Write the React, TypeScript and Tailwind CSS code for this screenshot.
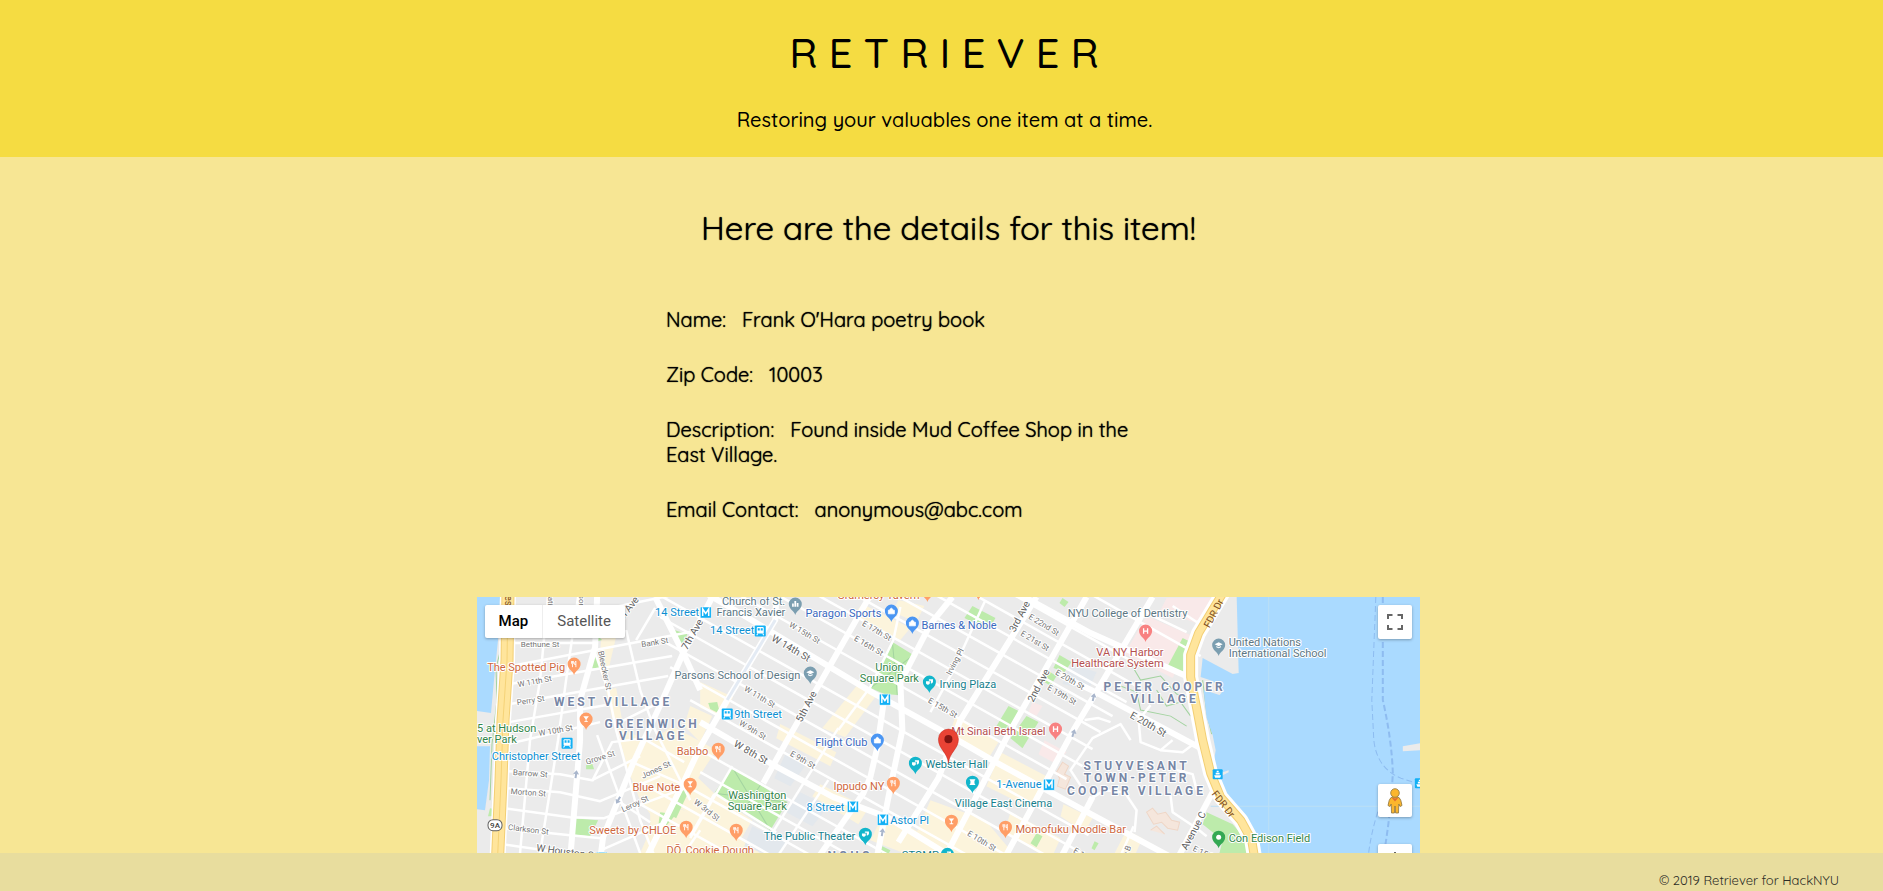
import React from 'react';

const HALO = 'stroke-white [paint-order:stroke] [stroke-linejoin:round]';

type Pt = [number, number];

const line = (pts: Pt[]) => 'M' + pts.map((p) => p.join(' ')).join(' L');
const area = (pts: Pt[]) => line(pts) + ' Z';

/* Cross streets of the main grid all share one slope. */
const street = (yAt940: number, x1: number, x2: number): Pt[] => [
  [x1, Math.round(yAt940 + (x1 - 940) * 0.56)],
  [x2, Math.round(yAt940 + (x2 - 940) * 0.56)],
];

const WATER_WEST: Pt[][] = [
  [[477, 597], [500, 597], [498, 640], [494, 680], [491, 713], [477, 711]],
  [[477, 746], [490, 746], [489, 780], [485, 810], [477, 809]],
];

const WATER_EAST: Pt[] = [
  [1236, 597], [1238, 673], [1232, 674], [1202, 658], [1200, 677], [1212, 681], [1223, 690], [1219, 695],
  [1203, 690], [1206, 718], [1212, 735], [1215, 750], [1213, 763], [1220, 784], [1224, 798], [1247, 820],
  [1257, 840], [1262, 860], [1290, 1000], [1425, 1000], [1425, 597],
];

const COMMERCIAL: Pt[][] = [
  [[602, 625], [618, 628], [606, 680], [600, 652]],
  [[606, 690], [616, 688], [622, 720], [612, 718]],
  [[700, 682], [733, 697], [722, 716], [700, 708]],
  [[690, 706], [712, 716], [700, 742], [684, 726]],
  [[616, 726], [650, 742], [672, 726], [716, 750], [690, 790], [662, 830], [640, 800], [628, 770]],
  [[650, 800], [690, 812], [730, 832], [760, 853], [640, 853], [650, 830]],
  [[690, 770], [716, 795], [752, 820], [740, 840], [680, 808]],
  [[857, 685], [875, 697], [845, 737], [822, 728]],
  [[862, 604], [910, 628], [900, 640], [852, 616]],
  [[898, 600], [924, 606], [916, 622], [892, 612]],
  [[780, 724], [836, 752], [830, 766], [776, 738]],
  [[820, 784], [868, 808], [858, 824], [812, 796]],
  [[884, 812], [950, 850], [948, 870], [870, 840]],
  [[955, 716], [998, 742], [988, 758], [948, 738]],
  [[1000, 752], [1046, 776], [1030, 808], [986, 786]],
  [[930, 800], [985, 820], [1010, 850], [960, 870], [912, 842]],
  [[1010, 812], [1060, 838], [1050, 860], [1004, 832]],
  [[1063, 804], [1092, 818], [1084, 832], [1060, 816]],
  [[1126, 830], [1142, 838], [1132, 860], [1114, 853]],
];

const HEALTH: Pt[][] = [
  [[1146, 616], [1192, 636], [1172, 678], [1124, 654]],
  [[1166, 598], [1218, 598], [1198, 624], [1160, 610]],
  [[1032, 702], [1042, 706], [1036, 716], [1028, 712]],
  [[1044, 740], [1066, 752], [1056, 764], [1038, 754]],
];

const CAMPUS: Pt[][] = [
  [[786, 752], [806, 764], [790, 786], [774, 778]],
  [[800, 792], [828, 806], [812, 826], [786, 812]],
  [[752, 826], [786, 842], [778, 858], [744, 846]],
  [[1070, 664], [1096, 672], [1088, 690], [1062, 684]],
];

const PARKS: Pt[][] = [
  [[892, 642], [913, 655], [897, 695], [884, 694], [870, 688]],
  [[732, 767], [787, 802], [770, 830], [714, 793]],
  [[972, 606], [995, 618], [988, 630], [964, 618]],
  [[1059, 655], [1071, 662], [1064, 672], [1053, 668]],
  [[1048, 671], [1056, 676], [1050, 686], [1044, 682]],
  [[1008, 706], [1020, 712], [1008, 732], [996, 726]],
  [[1026, 716], [1038, 722], [1022, 748], [1010, 738]],
  [[1062, 598], [1068, 602], [1064, 607], [1059, 603]],
  [[674, 630], [687, 634], [683, 648]],
  [[596, 652], [600, 668], [591, 668]],
  [[595, 634], [602, 640], [594, 642]],
  [[708, 703], [717, 702], [720, 714], [710, 709]],
  [[573, 818], [598, 820], [590, 836], [571, 834]],
  [[678, 792], [690, 788], [676, 818], [666, 812]],
  [[660, 812], [676, 814], [664, 828], [658, 826]],
  [[586, 765], [592, 763], [594, 769], [586, 769]],
  [[1182, 638], [1190, 642], [1184, 678], [1166, 668]],
  [[1036, 833], [1042, 836], [1036, 847], [1030, 843]],
  [[1094, 841], [1098, 843], [1094, 850], [1091, 848]],
  [[1206, 812], [1232, 824], [1246, 840], [1250, 870], [1216, 864], [1222, 840], [1202, 824]],
  [[882, 846], [890, 850], [886, 858], [878, 856]],
  [[490, 808], [495, 809], [494, 816], [488, 816]],
];

const PATHS: Pt[][] = [
  [[732, 767], [770, 830]], [[787, 802], [714, 793]], [[760, 785], [742, 812]],
  [[892, 642], [897, 695]], [[913, 655], [870, 688]],
  [[1128, 660], [1140, 680], [1160, 676], [1176, 694], [1190, 698]],
  [[1120, 686], [1136, 692], [1140, 710], [1170, 716], [1186, 726]],
  [[1156, 690], [1166, 706], [1180, 702], [1190, 716]],
  [[503, 640], [496, 668], [497, 700], [492, 744], [490, 800]],
  [[1202, 680], [1206, 712], [1211, 734]],
];

const MINOR: Pt[][] = [
  /* north of 14th Street */
  street(708, 730, 1066), street(686, 740, 1082), street(664, 760, 1092), street(642, 800, 1100),
  street(620, 860, 1112), street(598, 880, 1126), street(576, 930, 1136), street(554, 960, 1140),
  street(510, 1010, 1200),
  /* south of 14th Street */
  street(752, 650, 1088), street(774, 660, 1080), street(796, 665, 1072), street(818, 670, 1070),
  street(840, 690, 1110), street(884, 700, 960), street(906, 700, 860), street(928, 690, 830),
  street(818, 1060, 1130), street(795, 1060, 1140), street(950, 640, 790), street(972, 640, 760),
  /* West Village streets */
  [[513, 613], [596, 608]], [[513, 643], [596, 643]], [[511, 666], [690, 632]], [[510, 684], [672, 656]],
  [[510, 704], [668, 676]], [[509, 722], [612, 704]], [[508, 744], [600, 722]], [[507, 771], [560, 774], [592, 780], [640, 756]],
  [[506, 788], [560, 792], [600, 801], [660, 776]], [[504, 808], [570, 817], [604, 818], [690, 786]],
  [[503, 828], [570, 835], [601, 838]], [[601, 850], [660, 824]], [[502, 844], [600, 858]],
  [[600, 610], [668, 596]], [[620, 722], [664, 700]], [[592, 781], [612, 742], [646, 738]],
  [[646, 740], [684, 762]], [[632, 762], [682, 784]], [[617, 800], [650, 822]],
  /* West Village avenues */
  [[548, 597], [540, 680], [530, 740], [520, 853]], [[578, 597], [566, 680], [558, 740], [540, 853]],
  [[593, 647], [608, 690], [616, 730], [640, 820], [660, 870]],
  [[597, 735], [617, 790], [640, 853]], [[640, 690], [654, 728], [690, 800]],
  [[626, 630], [640, 690]], [[655, 608], [636, 640]],
  /* lower avenues of the grid */
  [[838, 728], [797, 793], [770, 836]], [[828, 780], [776, 858]], [[900, 607], [893, 640], [870, 687], [838, 730]],
  [[985, 600], [952, 672], [930, 712]], [[1133, 826], [1118, 860]], [[700, 830], [672, 870]],
  [[732, 766], [690, 838]], [[714, 794], [690, 836]], [[714, 793], [776, 832]],
  /* housing estate loops */
  [[1083, 790], [1070, 770], [1092, 738], [1120, 724], [1130, 740]],
  [[1088, 800], [1104, 790], [1124, 792], [1136, 810], [1134, 832]],
  [[1172, 740], [1160, 750], [1140, 742], [1138, 720], [1150, 705]],
  [[1170, 796], [1172, 812], [1196, 828], [1206, 836]],
  [[1160, 750], [1182, 752], [1198, 740]], [[1140, 610], [1186, 632]],
  [[1172, 606], [1196, 622], [1210, 618]],
  [[1176, 770], [1192, 774], [1196, 790]], [[1084, 720], [1098, 718], [1110, 722]],
];

const MAJOR: Pt[][] = [
  /* 14th, 8th, 23rd and 20th Streets */
  [[660, 566], [763, 627], [873, 693], [940, 730], [997, 763], [1083, 810], [1180, 862]],
  [[700, 722], [777, 767], [833, 797], [887, 817], [950, 856]],
  [[1000, 584], [1090, 633], [1190, 678]],
  [[1060, 675], [1097, 693], [1200, 748]],
  /* avenues */
  [[869, 597], [787, 740], [763, 783]],
  [[776, 597], [775, 620], [727, 700], [700, 747], [683, 783], [644, 862]],
  [[712, 597], [683, 653], [660, 705], [633, 763], [603, 837], [600, 860]],
  [[655, 597], [683, 653], [700, 690]],
  [[597, 597], [595, 647], [580, 700], [580, 740], [570, 860]],
  [[952, 597], [930, 624], [900, 682], [902, 730], [890, 787], [876, 860]],
  [[884, 697], [877, 747], [870, 777], [863, 793], [816, 860]],
  [[1036, 597], [960, 720], [938, 778], [898, 842]],
  [[1086, 597], [1010, 730], [944, 858]],
  [[1152, 597], [1097, 690], [1073, 730], [1003, 860]],
  [[1092, 797], [1060, 858]],
  [[1212, 792], [1176, 860]],
];

const FDR: Pt[] = [[1224, 590], [1198, 633], [1190, 655], [1190, 677], [1196, 708], [1202, 740], [1210, 773], [1220, 797], [1240, 820], [1251, 840], [1256, 870]];

const HIGHWAY_WEST: Pt[] = [[508, 590], [507, 660], [503, 720], [501, 780], [497, 870]];

const STREET_LABELS: [string, number, number, number][] = [
  ['Bethune St', 540, 647, 0], ['Bank St', 655, 645, -9], ['W 11th St', 535, 684, -11], ['Perry St', 531, 703, -9],
  ['W 10th St', 556, 733, -10], ['Bleecker St', 602, 671, 78], ['Grove St', 601, 760, -18], ['Jones St', 657, 772, -25],
  ['Leroy St', 636, 806, -25], ['W 3rd St', 705, 812, 38], ['Barrow St', 530, 776, 4], ['Morton St', 528, 795, 4],
  ['Clarkson St', 528, 832, 7], ['W 15th St', 803, 635, 31], ['E 17th St', 875, 633, 30], ['E 16th St', 867, 648, 30],
  ['W 11th St', 758, 699, 31], ['W 9th St', 751, 732, 31], ['E 9th St', 801, 762, 30], ['E 22nd St', 1042, 627, 31],
  ['E 21st St', 1033, 643, 31], ['E 20th St', 1068, 682, 30], ['E 19th St', 1060, 697, 30], ['E 15th St', 941, 710, 30],
  ['Irving Pl', 957, 663, -62], ['E 10th St', 980, 843, 31], ['E 11th St', 1086, 860, 31], ['E 15th St', 1206, 857, 25],
  ['Horatio', 548, 597, 90], ['Hudson', 579, 594, 90], ['Ave B', 1127, 856, -68],
];

const AVENUE_LABELS: [string, number, number, number][] = [
  ['8th Ave', 629, 613, -52], ['7th Ave', 695, 636, -60], ['W 14th St', 789, 651, 30], ['5th Ave', 809, 708, -62],
  ['3rd Ave', 1022, 618, -62], ['2nd Ave', 1041, 687, -62], ['E 20th St', 1146, 727, 30], ['W 8th St', 749, 755, 30],
  ['Avenue C', 1196, 832, -62], ['W Houston St', 566, 855, 8],
];

type Tone = 'food' | 'shop' | 'fun' | 'transit' | 'health' | 'school' | 'park';

const TONE_TEXT: Record<Tone, string> = {
  food: 'fill-[#ce6740]', shop: 'fill-[#3a69c0]', fun: 'fill-[#16808c]', transit: 'fill-[#0d8fd2]',
  health: 'fill-[#b5504f]', school: 'fill-[#5c7784]', park: 'fill-[#33864a]',
};

const TONE_PIN: Record<Tone, string> = {
  food: 'fill-[#ff9e67]', shop: 'fill-[#4b96f3]', fun: 'fill-[#12b5cb]', transit: 'fill-[#12b0f5]',
  health: 'fill-[#f88181]', school: 'fill-[#7b9eb0]', park: 'fill-[#34a853]',
};

type Anchor = 'start' | 'middle' | 'end';

const PLACES: [string, number, number, Tone, Anchor][] = [
  ['14 Street', 699, 616, 'transit', 'end'], ['Church of St.', 785, 605, 'school', 'end'],
  ['Francis Xavier', 785, 616, 'school', 'end'], ['14 Street', 754, 634, 'transit', 'end'],
  ['Paragon Sports', 881, 617, 'shop', 'end'], ['Barnes & Noble', 921, 629, 'shop', 'start'],
  ['Gramercy Tavern', 878, 599, 'food', 'middle'],
  ['Parsons School of Design', 800, 679, 'school', 'end'], ['Union', 889, 671, 'park', 'middle'],
  ['Square Park', 889, 682, 'park', 'middle'], ['Irving Plaza', 939, 688, 'fun', 'start'],
  ['9th Street', 734, 718, 'transit', 'start'], ['The Spotted Pig', 565, 671, 'food', 'end'],
  ['5 at Hudson', 477, 732, 'park', 'start'], ['ver Park', 477, 743, 'park', 'start'],
  ['Christopher Street', 536, 760, 'transit', 'middle'], ['Babbo', 708, 755, 'food', 'end'],
  ['Blue Note', 680, 791, 'food', 'end'], ['Sweets by CHLOE', 676, 834, 'food', 'end'],
  ['DŌ, Cookie Dough', 710, 854, 'food', 'middle'], ['Washington', 757, 799, 'park', 'middle'],
  ['Square Park', 757, 810, 'park', 'middle'], ['Flight Club', 867, 746, 'shop', 'end'],
  ['Ippudo NY', 884, 790, 'food', 'end'], ['8 Street', 844, 811, 'transit', 'end'],
  ['Astor Pl', 890, 824, 'transit', 'start'], ['The Public Theater', 855, 840, 'fun', 'end'],
  ['STOMP', 920, 859, 'fun', 'middle'], ['Webster Hall', 925, 768, 'fun', 'start'],
  ['Village East Cinema', 1003, 807, 'fun', 'middle'], ['1-Avenue', 1041, 788, 'transit', 'end'],
  ['Momofuku Noodle Bar', 1015, 833, 'food', 'start'], ['Mt Sinai Beth Israel', 1045, 735, 'health', 'end'],
  ['NYU College of Dentistry', 1127, 617, 'school', 'middle'], ['VA NY Harbor', 1163, 656, 'health', 'end'],
  ['Healthcare System', 1163, 667, 'health', 'end'], ['United Nations', 1228, 646, 'school', 'start'],
  ['International School', 1228, 657, 'school', 'start'], ['Con Edison Field', 1228, 842, 'park', 'start'],
];

const DISTRICTS: [string, number, number][] = [
  ['WEST VILLAGE', 613, 706], ['GREENWICH', 652, 728], ['VILLAGE', 653, 740], ['PETER COOPER', 1164, 691],
  ['VILLAGE', 1164, 703], ['STUYVESANT', 1136, 770], ['TOWN-PETER', 1136, 782], ['COOPER VILLAGE', 1136, 795],
  ['NOHO', 850, 860],
];

type Glyph = 'fork' | 'glass' | 'bag' | 'mask' | 'cap' | 'cross' | 'bars' | 'tree' | 'film';

const GLYPHS: Record<Glyph, React.ReactNode> = {
  fork: <path d="M-2.5 -3v2.2q0 .9 .9 .9v3M-1.6 -3v2.5M-.7 -3v2.2q0 .9 -.9 .9M1.8 3.1v-6q-1.3 .6 -1.3 3.3h1.3" className="fill-none stroke-white stroke-[0.9]" />,
  glass: <path d="M-2.8 -2.8h5.6l-2.3 2.9v2h1.3v.9h-3.6v-.9h1.3v-2z" className="fill-white" />,
  bag: <path d="M-3 -.8h6v3.600h-6zM-1.500 -.8v-.8q1.500 -2.400 3 0v.8" className="fill-white stroke-white stroke-[0.8]" />,
  mask: <path d="M-3.4 -.8h3.8v2.2q-1.9 2.4 -3.8 0zM.9 -2.8h2.7v2.6q-1 1.7 -2.2 1.5v-2.7h-1.9v-1.4z" className="fill-white" />,
  cap: <path d="M-4 -.8l4 -2 4 2 -4 2zM-2.3 .9l2.3 1.2 2.3 -1.2v1.4q-2.3 1.6 -4.6 0z" className="fill-white" />,
  cross: <path d="M-2 -2.8v5.6M2 -2.8v5.6M-2 0h4" className="fill-none stroke-white stroke-[1.3]" />,
  bars: <path d="M-3.2 -.4h1.7v3.2h-1.7zM-.9 -3h1.8v5.8h-1.8zM1.5 -1h1.7v3.8h-1.7z" className="fill-white" />,
  tree: <circle r="2.5" className="fill-white" />,
  film: <path d="M-3 -2.8h6l-1 1.7v2.2l1 1.7h-6l1 -1.7v-2.2z" className="fill-white" />,
};

const PINS: [number, number, Tone, Glyph][] = [
  [574, 664, 'food', 'fork'], [586, 719, 'food', 'glass'], [795, 604, 'school', 'bars'], [891, 611, 'shop', 'bag'],
  [912, 623, 'shop', 'bag'], [810, 673, 'school', 'cap'], [929, 682, 'fun', 'mask'], [1145, 631, 'health', 'cross'],
  [1055, 729, 'health', 'cross'], [1218, 645, 'school', 'cap'], [718, 749, 'food', 'fork'], [690, 784, 'food', 'glass'],
  [686, 827, 'food', 'fork'], [736, 830, 'food', 'fork'], [877, 740, 'shop', 'bag'], [915, 763, 'fun', 'mask'],
  [893, 783, 'food', 'fork'], [865, 834, 'fun', 'mask'], [972, 782, 'fun', 'film'], [951, 821, 'food', 'glass'],
  [1005, 827, 'food', 'fork'], [947, 854, 'fun', 'mask'], [1218, 837, 'park', 'tree'], [927, 591, 'food', 'fork'],
  [978, 589, 'food', 'fork'],
];

const SUBWAYS: [number, number][] = [[705, 612], [884, 699], [852, 806], [882, 819], [1048, 784], [601, 857]];
const TRAINS: [number, number][] = [[760, 631], [727, 714], [567, 743]];
const FERRIES: [number, number][] = [[1217, 774], [1419, 783]];
const ARROWS: [number, number, number][] = [[1093, 697, 12], [1073, 733, 18], [882, 832, 8], [576, 774, 8], [618, 800, 210]];

function Place({ x, y, tone, glyph }: { x: number; y: number; tone: Tone; glyph: Glyph }) {
  return (
    <g transform={`translate(${x} ${y})`}>
      <path d="M0 11 C-1 7 -6.500 5 -6.500 0 A6.500 6.500 0 0 1 6.500 0 C6.500 5 1 7 0 11Z" className={TONE_PIN[tone]} />
      {GLYPHS[glyph]}
    </g>
  );
}

function CityMap() {
  return (
    <svg
      viewBox="477 597 943 400"
      preserveAspectRatio="xMidYMin slice"
      className="block h-full w-full bg-[#ebebeb] font-[Roboto,sans-serif] font-normal"
      role="img"
      aria-label="Map of lower Manhattan"
    >
      <g className="fill-[#fcf4dc]">{COMMERCIAL.map((p, i) => <path key={i} d={area(p)} />)}</g>
      <g className="fill-[#f9e9e9]">{HEALTH.map((p, i) => <path key={i} d={area(p)} />)}</g>
      <g className="fill-[#e3e8ed]">{CAMPUS.map((p, i) => <path key={i} d={area(p)} />)}</g>
      <g className="fill-[#bdebab]">{PARKS.map((p, i) => <path key={i} d={area(p)} />)}</g>
      <g className="fill-none stroke-[#a3d3a0] stroke-1">{PATHS.map((p, i) => <path key={i} d={line(p)} />)}</g>
      <path
        d="M1056 772l6 -10 6 4 -4 8 6 3 -5 12 -8 -3 2 -8zM1146 812l6 -4 5 6 8 -2 6 8 8 2 -2 8 -10 -2 -6 -6 -8 2zM1150 830l6 -4 8 8"
        className="fill-[#f5e6dc] stroke-[#efd6c6] stroke-1"
      />
      <g className="fill-none stroke-white stroke-[2.500] [stroke-linejoin:round]">
        {MINOR.map((p, i) => <path key={i} d={line(p)} />)}
      </g>
      <g className="fill-none stroke-white stroke-[6] [stroke-linejoin:round]">
        {MAJOR.map((p, i) => <path key={i} d={line(p)} />)}
      </g>
      <path d="M775 620L727 700" className="fill-none stroke-[#e4ebf4] stroke-[3]" />

      <g className="fill-[#aadaff]">
        {WATER_WEST.map((p, i) => <path key={i} d={area(p)} />)}
        <path d={area(WATER_EAST)} />
      </g>
      <path d="M1219 773l9 -3v2l-8 4zM1402 746l18 -3v7l-18 1z" className="fill-[#ebebeb]" />
      <path d="M1268 597v400M1210 806h210" className="fill-none stroke-[#bcdff5] stroke-1" />
      <g className="fill-none stroke-[#8ebcf0] stroke-1 [stroke-dasharray:6_3]">
        <path d="M1375 597L1371 700L1373 740Q1376 768 1400 778L1416 783" />
        <path d="M1382 597L1382 700Q1391 740 1392 773Q1390 815 1382 860" className="stroke-2" />
        <path d="M1380 803Q1370 830 1367 860" />
      </g>

      <g className="fill-none [stroke-linejoin:round]">
        <path d={line(FDR)} className="stroke-white stroke-[15]" />
        <path d={line(FDR)} className="stroke-[#f3cf74] stroke-[9]" />
        <path d={line(FDR)} className="stroke-[#ffe59c] stroke-[7]" />
        <path d={line(HIGHWAY_WEST)} className="stroke-white stroke-[16]" />
        <path d={line(HIGHWAY_WEST)} className="stroke-[#f3cf74] stroke-[13]" />
        <path d={line(HIGHWAY_WEST)} className="stroke-[#ffe59c] stroke-[11]" />
        <path d={line(HIGHWAY_WEST)} className="stroke-[#f5d378] stroke-1" />
      </g>

      <g className="fill-[#a9b6cc]">
        {ARROWS.map(([x, y, r], i) => (
          <path key={i} d="M-1 4v-4h-2l3 -4 3 4h-2v4z" transform={`translate(${x} ${y}) rotate(${r})`} />
        ))}
      </g>

      <g textAnchor="middle" className={`fill-[#757575] stroke-2 text-[8px] ${HALO}`}>
        {STREET_LABELS.map(([t, x, y, r], i) => (
          <text key={i} transform={`translate(${x} ${y}) rotate(${r})`}>{t}</text>
        ))}
      </g>
      <g textAnchor="middle" className={`fill-[#616161] stroke-2 text-[10px] ${HALO}`}>
        {AVENUE_LABELS.map(([t, x, y, r], i) => (
          <text key={i} transform={`translate(${x} ${y}) rotate(${r})`}>{t}</text>
        ))}
      </g>
      <g textAnchor="middle" className="fill-[#7d4e1c] text-[10px]">
        <text transform="translate(1216 615) rotate(-62)">FDR Dr</text>
        <text transform="translate(1220 806) rotate(52)">FDR Dr</text>
        <text transform="translate(505 598) rotate(90)">West</text>
      </g>

      <g textAnchor="middle" className={`fill-[#7786a5] stroke-2 text-[12px] font-bold tracking-[3px] ${HALO}`}>
        {DISTRICTS.map(([t, x, y], i) => <text key={i} x={x} y={y}>{t}</text>)}
      </g>

      {PINS.map(([x, y, tone, glyph], i) => <Place key={i} x={x} y={y} tone={tone} glyph={glyph} />)}

      <g className="text-[11px]">
        {PLACES.map(([t, x, y, tone, anchor], i) => (
          <text key={i} x={x} y={y} textAnchor={anchor} className={`${TONE_TEXT[tone]} stroke-2 ${HALO}`}>{t}</text>
        ))}
      </g>

      {SUBWAYS.map(([x, y], i) => (
        <g key={i} transform={`translate(${x} ${y})`}>
          <rect x="-5" y="-5" width="11" height="11" className="fill-[#12b0f5] stroke-white stroke-[0.5]" />
          <path d="M-2.500 4v-7l3 4.500 3 -4.500v7" className="fill-none stroke-white stroke-[1.500]" />
        </g>
      ))}
      {TRAINS.map(([x, y], i) => (
        <g key={i} transform={`translate(${x} ${y})`}>
          <rect x="-5.500" y="-5.500" width="11" height="11" rx="1" className="fill-[#12b0f5]" />
          <rect x="-3.500" y="-4" width="7" height="6.500" rx="1" className="fill-white" />
          <path d="M-2.500 -2.800h2v2.300h-2zM.5 -2.800h2v2.300h-2z" className="fill-[#12b0f5]" />
          <path d="M-2.500 2.500l-1 1.800M2.500 2.500l1 1.800" className="stroke-white stroke-1" />
        </g>
      ))}
      {FERRIES.map(([x, y], i) => (
        <g key={i} transform={`translate(${x} ${y})`}>
          <rect x="-5" y="-5" width="10" height="10" rx="1" className="fill-[#12b0f5]" />
          <path d="M-3.500 1h7l-1 2.500h-5zM-2 -1.500h4v1.800h-4zM-1 -3.500h2v1.500h-2z" className="fill-white" />
        </g>
      ))}

      <g transform="translate(495 825)">
        <rect x="-7" y="-5.500" width="14" height="11" rx="5" className="fill-white stroke-[#616161] stroke-1" />
        <text y="3" textAnchor="middle" className="fill-[#424242] text-[8px] font-medium">9A</text>
      </g>

      <g transform="translate(948 739)">
        <path d="M0 24C-1 13 -10 10 -10 0A10 10 0 0 1 10 0C10 10 1 13 0 24Z" className="fill-[#ea4335] stroke-[#c5281c] stroke-[0.5]" />
        <circle r="4" className="fill-[#811411]" />
      </g>
    </svg>
  );
}

const CONTROL = 'flex w-[34px] items-center justify-center rounded-[2px] bg-white shadow-[0_1px_3px_rgba(0,0,0,0.3)]';

function MapPanel() {
  return (
    <div className="relative mx-auto h-[400px] w-[50.5%] overflow-hidden">
      <CityMap />
      <div className="absolute top-2 left-2 flex h-[33px] rounded-[2px] bg-white font-[Roboto,sans-serif] text-[15px] shadow-[0_1px_3px_rgba(0,0,0,0.3)]">
        <button type="button" className="border-r border-[#eeeeee] px-[14px] font-medium text-black">Map</button>
        <button type="button" className="px-[14px] font-normal text-[#565656]">Satellite</button>
      </div>
      <button type="button" aria-label="Toggle fullscreen view" className={`${CONTROL} absolute top-2 right-2 h-[34px]`}>
        <svg width="16" height="16" viewBox="0 0 16 16" className="fill-none stroke-[#666666] stroke-2">
          <path d="M1 5V1H5.500M10.500 1H15V5M15 11V15H10.500M5.500 15H1V11" />
        </svg>
      </button>
      <button type="button" aria-label="Street View" className={`${CONTROL} absolute top-[187px] right-2 h-[33px]`}>
        <svg width="16" height="26" viewBox="0 0 16 26">
          <path
            d="M4 9.500Q8 7.500 12 9.500Q14 11 15 17.500L13 18.500L11.800 16L11.500 25H8.600L8 18L7.400 25H4.500L4.200 16L3 18.500L1 17.500Q2 11 4 9.500Z"
            className="fill-[#fbb62d] stroke-[#8c7440] stroke-[0.8]"
          />
          <path d="M4.500 9.500L8 13.500L11.500 9.500L8 10.500Z" className="fill-[#e06c30]" />
          <circle cx="8" cy="5" r="4.300" className="fill-[#fbb62d] stroke-[#8c7440] stroke-[0.8]" />
        </svg>
      </button>
      <button type="button" aria-label="Zoom in" className={`${CONTROL} absolute top-[247px] right-2 h-[34px]`}>
        <svg width="16" height="18" viewBox="0 0 16 18" className="fill-none stroke-[#666666] stroke-2">
          <path d="M8 0V16M0 8H16" />
        </svg>
      </button>
    </div>
  );
}

const DETAILS = [
  { label: 'Name:', value: "Frank O'Hara poetry book" },
  { label: 'Zip Code:', value: '10003' },
  { label: 'Description:', value: 'Found inside Mud Coffee Shop in the East Village.' },
  { label: 'Email Contact:', value: 'anonymous@abc.com' },
];

export default function App() {
  return (
    <div className="flex h-screen flex-col overflow-hidden bg-[#f7e694] font-[Quicksand,Lato,sans-serif] font-normal text-black">
      <header className="flex shrink-0 flex-col items-center bg-[#f5dc42] pt-[26px] pb-[25px] pl-1.5 font-medium">
        <h1 className="pl-[10px] text-[42px] leading-[53px] tracking-[11px]">RETRIEVER</h1>
        <p className="pt-7 text-[20px] leading-[25px]">Restoring your valuables one item at a time.</p>
      </header>
      <main className="min-h-0 flex-1 overflow-y-auto pl-[14px] [scrollbar-width:none]">
        <h2 className="pt-[50px] text-center text-[33px] leading-[41px] [text-shadow:0_0_1px_#000]">
          Here are the details for this item!
        </h2>
        <dl className="mx-auto flex w-[565px] flex-col gap-[30px] pt-[59px] pb-[75px] text-[20px] leading-[25px] [text-shadow:0_0_1px_#000]">
          {DETAILS.map((d) => (
            <div key={d.label} className="w-5/6">
              <dt className="inline pr-4">{d.label}</dt>
              <dd className="inline">{d.value}</dd>
            </div>
          ))}
        </dl>
        <MapPanel />
      </main>
      <footer className="flex h-[38px] shrink-0 items-center justify-end bg-[#e8dd9e] pt-4 pr-11 text-[13px] leading-4 text-[#2c2c26]">
        © 2019 Retriever for HackNYU
      </footer>
    </div>
  );
}
